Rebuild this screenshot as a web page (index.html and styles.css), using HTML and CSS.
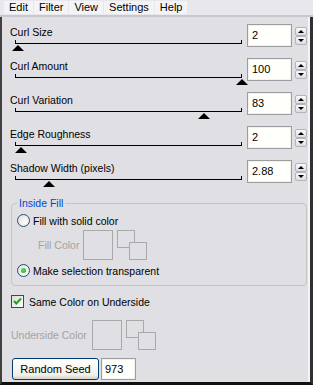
FILE: index.html
```html
<!DOCTYPE html>
<html>
<head>
<meta charset="utf-8">
<link rel="stylesheet" href="styles.css">
</head>
<body>
<div class="menubar">
  <span class="menu-item">Edit</span>
  <span class="menu-item">Filter</span>
  <span class="menu-item">View</span>
  <span class="menu-item">Settings</span>
  <span class="menu-item">Help</span>
</div>
<div class="panel">
  <div class="row">
    <div class="slider">
      <div class="label">Curl Size</div>
      <div class="track"><span class="thumb" style="left:2px"></span></div>
    </div>
    <div class="num">2</div>
    <div class="spin"><span class="spin-btn up"></span><span class="spin-btn down"></span></div>
  </div>
  <div class="row">
    <div class="slider">
      <div class="label">Curl Amount</div>
      <div class="track"><span class="thumb" style="left:225.5px"></span></div>
    </div>
    <div class="num">100</div>
    <div class="spin"><span class="spin-btn up"></span><span class="spin-btn down"></span></div>
  </div>
  <div class="row">
    <div class="slider">
      <div class="label">Curl Variation</div>
      <div class="track"><span class="thumb" style="left:187.5px"></span></div>
    </div>
    <div class="num">83</div>
    <div class="spin"><span class="spin-btn up"></span><span class="spin-btn down"></span></div>
  </div>
  <div class="row">
    <div class="slider">
      <div class="label">Edge Roughness</div>
      <div class="track"><span class="thumb" style="left:4.5px"></span></div>
    </div>
    <div class="num">2</div>
    <div class="spin"><span class="spin-btn up"></span><span class="spin-btn down"></span></div>
  </div>
  <div class="row">
    <div class="slider">
      <div class="label">Shadow Width (pixels)</div>
      <div class="track"><span class="thumb" style="left:32.5px"></span></div>
    </div>
    <div class="num">2.88</div>
    <div class="spin"><span class="spin-btn up"></span><span class="spin-btn down"></span></div>
  </div>

  <fieldset class="group">
    <legend class="legend">Inside Fill</legend>
    <div class="option first">
      <span class="radio"></span><span class="opt-text">Fill with solid color</span>
    </div>
    <div class="color-row fill">
      <span class="color-label">Fill Color</span>
      <span class="swatch-big"></span>
      <span class="swatch-pair"><span class="sw sw-a"></span><span class="sw sw-b"></span></span>
    </div>
    <div class="option second">
      <span class="radio checked"><span class="dot"></span></span><span class="opt-text">Make selection transparent</span>
    </div>
  </fieldset>

  <div class="check-row">
    <span class="checkbox">
      <svg width="11" height="11" viewBox="0 0 11 11"><path d="M2 5 L4.3 7.5 L9 2.5" fill="none" stroke="#21a121" stroke-width="2"/></svg>
    </span>
    <span class="opt-text">Same Color on Underside</span>
  </div>

  <div class="color-row under">
    <span class="color-label">Underside Color</span>
    <span class="swatch-big"></span>
    <span class="swatch-pair"><span class="sw sw-a"></span><span class="sw sw-b"></span></span>
  </div>

  <div class="seed-row">
    <span class="button">Random Seed</span>
    <span class="seed">973</span>
  </div>
</div>
</body>
</html>
```

FILE: styles.css
```css
html, body {
  margin: 0;
  padding: 0;
}
body {
  width: 313px;
  height: 385px;
  overflow: hidden;
  background: #e0dfe3;
  font-family: "Liberation Sans", Arial, sans-serif;
  color: #000;
}
.menubar {
  height: 15px;
  display: flex;
  gap: 1px;
  padding-left: 4px;
  background: #e8e7eb;
  border-bottom: 2px solid #c8c7cb;
  box-sizing: border-box;
  height: 17px;
  padding-top: 1px;
}
.menu-item {
  font-size: 11px;
  line-height: 13px;
  height: 13px;
  padding: 0 5px;
  background: #f4f4f6;
}
.panel {
  height: 368px;
  box-sizing: border-box;
  border-left: 2px solid #404040;
  border-right: 3px solid #303030;
  border-bottom: 3px solid #101010;
  padding: 7px 0 0 8px;
  box-shadow: inset -2px 0 0 #f4f4f6;
}
.row {
  display: flex;
  height: 34px;
}
.slider {
  width: 237px;
  padding-top: 2px;
}
.label {
  font-size: 10.5px;
  line-height: 12px;
  height: 12px;
}
.track {
  position: relative;
  margin: 2px 0 0 5px;
  width: 225px;
  height: 3px;
  border-left: 1px solid #000;
  border-right: 1px solid #000;
  border-bottom: 1px solid #000;
}
.thumb {
  position: absolute;
  top: 5px;
  width: 0;
  height: 0;
  border-left: 6px solid transparent;
  border-right: 6px solid transparent;
  border-bottom: 6px solid #000;
  transform: translateX(-50%);
}
.num {
  box-sizing: border-box;
  width: 45px;
  height: 23px;
  border: 1px solid #9d9da1;
  box-shadow: inset 0 0 0 1px #f2f2ee;
  background: #fffffb;
  font-size: 11px;
  line-height: 21px;
  padding-left: 4px;
}
.spin {
  display: flex;
  flex-direction: column;
  margin: 3px 0 0 3px;
  gap: 0;
}
.spin-btn {
  box-sizing: border-box;
  width: 12px;
  height: 9px;
  border: 1px solid #b4b4b8;
  border-radius: 2px;
  background: linear-gradient(#fbfbfb, #dcdce2);
  position: relative;
}
.spin-btn::after {
  content: "";
  position: absolute;
  left: 2px;
  width: 0;
  height: 0;
  border-left: 3px solid transparent;
  border-right: 3px solid transparent;
}
.spin-btn.up::after {
  top: 2px;
  border-bottom: 3px solid #000;
}
.spin-btn.down::after {
  top: 2px;
  border-top: 3px solid #000;
}
.group {
  margin: 3px 0 0 1px;
  width: 296px;
  height: 89px;
  box-sizing: border-box;
  padding: 0 0 0 5px;
  border: 1px solid #c4c4c4;
  border-radius: 4px;
}
.legend {
  font-size: 10.5px;
  line-height: 12px;
  color: #0046d5;
  padding: 0 2px;
  margin-left: 0;
}
.option {
  display: flex;
  align-items: center;
  height: 13px;
  font-size: 10.5px;
}
.option.first {
  margin-top: 5px;
}
.option.second {
  margin-top: 4px;
}
.radio {
  box-sizing: border-box;
  width: 13px;
  height: 13px;
  border: 1px solid #1c5180;
  border-radius: 50%;
  background: radial-gradient(circle at 65% 65%, #ffffff, #dcdcd6);
  display: flex;
  align-items: center;
  justify-content: center;
}
.dot {
  width: 5px;
  height: 5px;
  border-radius: 50%;
  background: radial-gradient(circle at 40% 40%, #5fdf5f, #21a121);
}
.opt-text {
  margin-left: 3px;
  font-size: 10.5px;
  line-height: 12px;
}
.color-row {
  display: flex;
  align-items: center;
  height: 30px;
}
.color-row.fill {
  margin-top: 3px;
  padding-left: 21px;
}
.color-label {
  font-size: 10.5px;
  color: #a3a3a3;
  line-height: 12px;
}
.swatch-big {
  box-sizing: border-box;
  width: 30px;
  height: 30px;
  border: 1px solid #a9a9ab;
  margin-left: 4px;
}
.swatch-pair {
  position: relative;
  width: 30px;
  height: 30px;
  margin-left: 4px;
}
.sw {
  position: absolute;
  box-sizing: border-box;
  width: 18px;
  height: 18px;
  border: 1px solid #a9a9ab;
  background: #e0dfe3;
}
.sw-a { left: 0; top: 0; }
.sw-b { left: 12px; top: 12px; }
.check-row {
  display: flex;
  align-items: center;
  margin: 9px 0 0 1px;
  height: 13px;
}
.checkbox {
  box-sizing: border-box;
  width: 13px;
  height: 13px;
  border: 1px solid #1c5180;
  background: linear-gradient(135deg, #dcdcd7, #ffffff);
  display: flex;
  align-items: center;
  justify-content: center;
}
.check-row .opt-text {
  margin-left: 5px;
}
.color-row.under {
  margin-top: 12px;
  padding-left: 1px;
}
.color-row.under .swatch-big {
  margin-left: 5px;
}
.seed-row {
  display: flex;
  margin: 8px 0 0 2px;
  height: 22px;
}
.button {
  box-sizing: border-box;
  width: 87px;
  height: 22px;
  border: 1px solid #003c74;
  border-radius: 3px;
  background: linear-gradient(#ffffff, #f0f0ea 80%, #d6d0c5);
  font-size: 11px;
  line-height: 20px;
  text-align: center;
}
.seed {
  box-sizing: border-box;
  margin-left: 2px;
  width: 35px;
  height: 22px;
  border: 1px solid #9d9da1;
  box-shadow: inset 0 0 0 1px #f2f2ee;
  background: #fffffb;
  font-size: 11px;
  line-height: 20px;
  padding-left: 3px;
}
```
